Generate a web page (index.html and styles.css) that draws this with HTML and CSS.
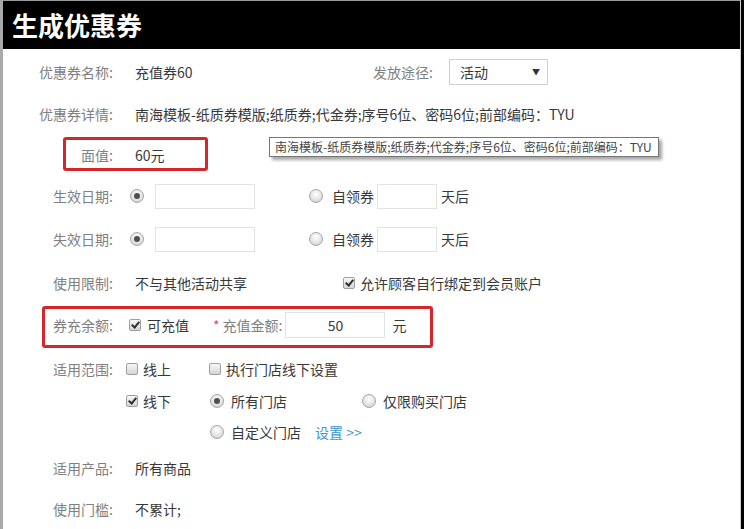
FILE: index.html
```html
<!DOCTYPE html>
<html>
<head>
  <meta charset="utf-8">
  <link rel="stylesheet" href="styles.css">
</head>
<body>
  <div class="window">
    <div class="title-bar">生成优惠券</div>

    <div class="form">
      <div class="row">
        <div class="label">优惠券名称:</div>
        <div class="value name-value">充值券60</div>
        <div class="sub-label">发放途径:</div>
        <div class="select">活动<span class="caret">▼</span></div>
      </div>

      <div class="row">
        <div class="label">优惠券详情:</div>
        <div class="value detail-value">南海模板-纸质券模版;纸质券;代金券;序号6位、密码6位;前部编码：TYU</div>
      </div>

      <div class="row row-face">
        <div class="label">面值:</div>
        <div class="value">60元</div>
        <div class="mark mark-face"></div>
        <div class="tooltip">南海模板-纸质券模版;纸质券;代金券;序号6位、密码6位;前部编码：TYU</div>
      </div>

      <div class="row">
        <div class="label">生效日期:</div>
        <div class="date-main">
          <span class="radio checked"></span>
          <span class="text-box date-box"></span>
        </div>
        <div class="date-alt">
          <span class="radio"></span>
          <span class="opt-text">自领券</span>
          <span class="text-box days-box"></span>
          <span class="unit">天后</span>
        </div>
      </div>

      <div class="row row-tall">
        <div class="label">失效日期:</div>
        <div class="date-main">
          <span class="radio checked"></span>
          <span class="text-box date-box"></span>
        </div>
        <div class="date-alt">
          <span class="radio"></span>
          <span class="opt-text">自领券</span>
          <span class="text-box days-box"></span>
          <span class="unit">天后</span>
        </div>
      </div>

      <div class="row row-tall">
        <div class="label">使用限制:</div>
        <div class="value limit-value">不与其他活动共享</div>
        <span class="checkbox checked"></span>
        <span class="check-text">允许顾客自行绑定到会员账户</span>
      </div>

      <div class="row row-balance">
        <div class="label">券充余额:</div>
        <span class="checkbox checked balance-check"></span>
        <span class="check-text recharge-text">可充值</span>
        <span class="required">*</span>
        <span class="field-name">充值金额:</span>
        <span class="text-box amount-box">50</span>
        <span class="unit yuan">元</span>
        <div class="mark mark-balance"></div>
      </div>

      <div class="scope">
        <div class="scope-line">
          <div class="label">适用范围:</div>
          <div class="scope-a">
            <span class="checkbox"></span>
            <span class="check-text">线上</span>
          </div>
          <div class="scope-b">
            <span class="checkbox"></span>
            <span class="check-text">执行门店线下设置</span>
          </div>
        </div>
        <div class="scope-line">
          <div class="label"></div>
          <div class="scope-a">
            <span class="checkbox checked"></span>
            <span class="check-text">线下</span>
          </div>
          <div class="scope-b radio-cell">
            <span class="radio checked"></span>
            <span class="opt-text store-text">所有门店</span>
          </div>
          <div class="scope-c">
            <span class="radio"></span>
            <span class="opt-text store-text">仅限购买门店</span>
          </div>
        </div>
        <div class="scope-line last">
          <div class="label"></div>
          <div class="scope-a"></div>
          <div class="scope-b radio-cell">
            <span class="radio"></span>
            <span class="opt-text store-text">自定义门店</span>
            <a class="link" href="#">设置 &gt;&gt;</a>
          </div>
        </div>
      </div>

      <div class="row">
        <div class="label">适用产品:</div>
        <div class="value">所有商品</div>
      </div>

      <div class="row row-last">
        <div class="label">使用门槛:</div>
        <div class="value">不累计;</div>
      </div>
    </div>
  </div>
</body>
</html>
```

FILE: styles.css
```css
html, body {
  margin: 0;
  padding: 0;
}

body {
  width: 744px;
  height: 529px;
  overflow: hidden;
  background: #000;
  font-family: "Noto Sans CJK SC", "Noto Sans", sans-serif;
  font-size: 14px;
  color: #383838;
}

.window {
  width: 737px;
  height: 528px;
  overflow: hidden;
  background: #fff;
  border-left: 3px solid #a9a9a9;
  border-right: 1px solid #d0d0d0;
  border-top: 1px solid #9c9c9c;
}

.title-bar {
  height: 48px;
  background: #000;
  color: #fff;
  font-size: 26px;
  font-weight: 700;
  line-height: 48px;
  padding-left: 9px;
}

.form {
  padding-top: 2px;
}

/* rows */
.row {
  position: relative;
  display: flex;
  align-items: center;
  height: 42px;
}

.row-face {
  height: 40px;
}

.row-tall {
  height: 44px;
}

.row-balance {
  height: 40px;
}

.row-last {
  height: 40px;
}

.label {
  width: 110px;
  flex: none;
  text-align: right;
  color: #808080;
  line-height: 20px;
}

.value {
  margin-left: 22px;
  line-height: 20px;
}

.name-value {
  width: 238px;
}

.limit-value {
  width: 208px;
  flex: none;
}

.sub-label {
  color: #808080;
}

.select {
  position: relative;
  width: 87px;
  height: 24px;
  margin-left: 16px;
  padding-left: 10px;
  border: 1px solid #cfcfcf;
  line-height: 24px;
}

.caret {
  position: absolute;
  right: 7px;
  top: 0;
  font-size: 8px;
  color: #333;
}

/* date rows */
.date-main {
  width: 179px;
  padding-left: 17px;
  display: flex;
  align-items: center;
}

.date-alt {
  display: flex;
  align-items: center;
}

.text-box {
  display: inline-block;
  box-sizing: border-box;
  border: 1px solid #e2e2e2;
  background: #fff;
}

.date-box {
  width: 100px;
  height: 25px;
  margin-left: 11px;
}

.days-box {
  width: 60px;
  height: 25px;
  margin-left: 3px;
}

.opt-text {
  margin-left: 9px;
}

.unit {
  margin-left: 4px;
}

/* radio + checkbox */
.radio {
  position: relative;
  display: inline-block;
  flex: none;
  box-sizing: border-box;
  width: 14px;
  height: 14px;
  border-radius: 50%;
  border: 1px solid #a5a5a5;
  background: radial-gradient(circle at 50% 35%, #ffffff 0, #e4e4e4 55%, #c8c8c8 100%);
}

.radio.checked::after {
  content: "";
  position: absolute;
  left: 3px;
  top: 3px;
  width: 6px;
  height: 6px;
  border-radius: 50%;
  background: #4f4f4f;
}

.checkbox {
  position: relative;
  display: inline-block;
  flex: none;
  box-sizing: border-box;
  width: 12px;
  height: 12px;
  border: 1px solid #9e9e9e;
  border-radius: 2px;
  background: linear-gradient(#f7f7f7, #d6d6d6);
}

.checkbox.checked::after {
  content: "";
  position: absolute;
  left: 3px;
  top: 0;
  width: 3px;
  height: 6px;
  border-right: 2px solid #2e2e2e;
  border-bottom: 2px solid #2e2e2e;
  transform: rotate(40deg);
}

.check-text {
  margin-left: 5px;
}

/* balance row */
.balance-check {
  margin-left: 16px;
}

.recharge-text {
  margin-left: 6px;
}

.required {
  margin-left: 24px;
  color: #e0534f;
}

.field-name {
  margin-left: 3px;
  color: #808080;
}

.amount-box {
  width: 100px;
  height: 26px;
  margin-left: 3px;
  text-align: center;
  line-height: 24px;
}

.yuan {
  margin-left: 7px;
}

/* red annotation boxes */
.mark {
  position: absolute;
  box-sizing: border-box;
  border: 3px solid #d5262b;
  border-radius: 3px;
}

.mark-face {
  left: 60px;
  top: 2px;
  width: 145px;
  height: 34px;
}

.mark-balance {
  left: 39px;
  top: 1px;
  width: 391px;
  height: 42px;
}

.tooltip {
  position: absolute;
  left: 266px;
  top: 2px;
  width: 390px;
  height: 20px;
  box-sizing: border-box;
  border: 1px solid #767676;
  background: #fff;
  box-shadow: 3px 3px 3px rgba(0, 0, 0, 0.35);
  font-size: 12px;
  line-height: 18px;
  padding-left: 5px;
  color: #444;
  white-space: nowrap;
}

/* scope block */
.scope {
  margin-top: 8px;
}

.scope-line {
  display: flex;
  align-items: center;
  height: 32px;
}

.scope-line.last {
  height: 30px;
}

.scope-a {
  width: 83px;
  padding-left: 13px;
  display: flex;
  align-items: center;
}

.scope-b {
  width: 153px;
  display: flex;
  align-items: center;
}

.radio-cell {
  width: 152px;
  padding-left: 1px;
}

.scope-c {
  display: flex;
  align-items: center;
}

.store-text {
  margin-left: 7px;
}

.link {
  margin-left: 14px;
  color: #3b95d2;
  text-decoration: none;
}
```
